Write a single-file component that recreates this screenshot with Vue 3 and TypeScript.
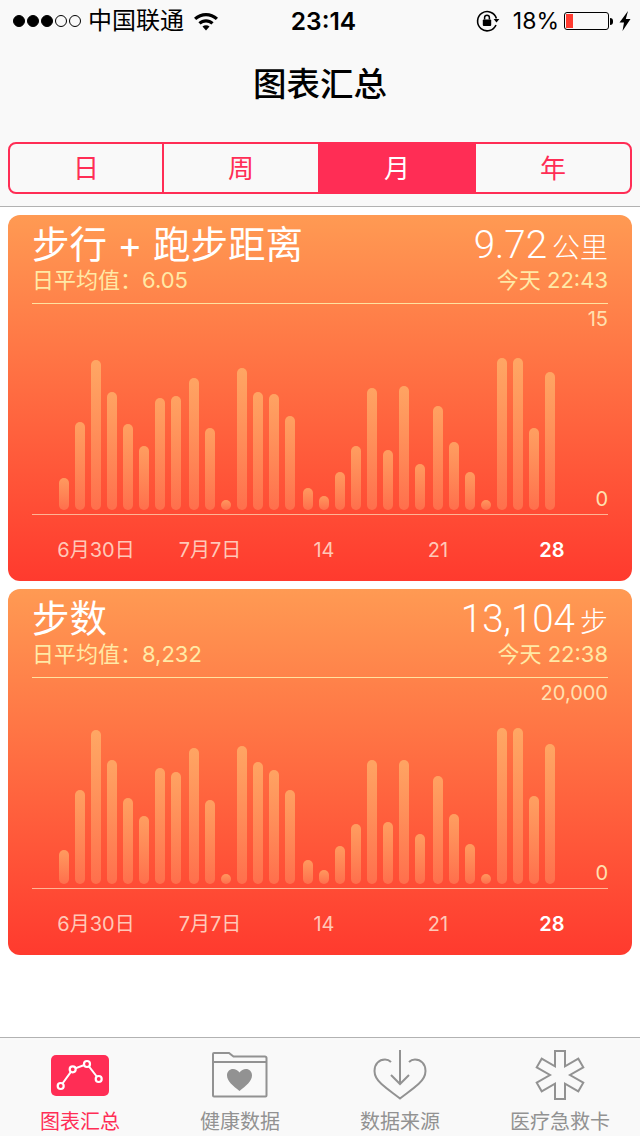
<template>
  <div class="page">
    <header class="top">
      <div class="status">
        <div class="status-left">
          <span class="signal">
            <i v-for="n in 5" :key="n" class="dot" :class="{ on: n <= 3 }"></i>
          </span>
          <span class="carrier">中国联通</span>
          <svg class="wifi" width="26" height="20" viewBox="0 0 26 20">
            <path d="M1 6.800C7.500 .4 18.500 .4 25 6.800l-2.200 2.300C17.200 4 8.800 4 3.200 9.100z" />
            <path d="M5.400 11.300c4.300-4 10.900-4 15.200 0l-2.200 2.300c-3.100-2.800-7.700-2.800-10.800 0z" />
            <path d="M9.500 15.600c2-1.700 5-1.700 7 0L13 19.500z" />
          </svg>
        </div>
        <div class="clock">23:14</div>
        <div class="status-right">
          <svg class="lock" width="24" height="24" viewBox="0 0 24 24">
            <path d="M20.400 9.500A9.600 9.600 0 1 0 20 16" fill="none" stroke="#000" stroke-width="1.600" />
            <path d="M17.600 10h5.800l-2.900 3.400z" fill="#000" />
            <rect x="6.800" y="10.400" width="8.400" height="6.600" rx="1" fill="#000" />
            <path d="M8.600 10.600V8.600a2.400 2.400 0 0 1 4.800 0v2" fill="none" stroke="#000" stroke-width="1.500" />
          </svg>
          <span class="percent">18%</span>
          <span class="battery"><i class="level"></i></span>
          <span class="nub"></span>
          <svg class="bolt" width="12" height="20" viewBox="0 0 12 20">
            <path d="M9 0 .5 11.500H5L3.500 20l8-12H6.800z" fill="#000" />
          </svg>
        </div>
      </div>
      <h1 class="title">图表汇总</h1>
      <div class="segments">
        <div
          v-for="(s, i) in segments"
          :key="s"
          class="segment"
          :class="{ active: i === 2 }"
        >{{ s }}</div>
      </div>
    </header>

    <main class="cards">
      <section v-for="card in cards" :key="card.name" class="card">
        <div class="card-head">
          <div class="head-row">
            <span class="name">{{ card.name }}</span>
            <span class="value">{{ card.value }}<small>{{ card.unit }}</small></span>
          </div>
          <div class="sub-row">
            <span>日平均值：{{ card.avg }}</span>
            <span>今天 {{ card.time }}</span>
          </div>
        </div>
        <div class="chart">
          <span class="y-label y-max">{{ card.max }}</span>
          <span class="y-label y-min">0</span>
          <div class="bars">
            <div v-for="(week, w) in groups(card.bars)" :key="w" class="week">
              <i
                v-for="(h, b) in week"
                :key="b"
                class="bar"
                :style="{ height: h + 'px' }"
              ></i>
            </div>
          </div>
        </div>
        <div class="x-axis">
          <span v-for="(d, i) in days" :key="d" :class="{ today: i === 4 }">{{ d }}</span>
        </div>
      </section>
    </main>

    <nav class="tabs">
      <div class="tab active">
        <div class="tab-icon">
          <svg width="58" height="41" viewBox="0 0 58 41">
            <rect width="58" height="41" rx="5" fill="#ff2d55" />
            <path d="M9.700 31 21.700 14.300 36 9l11.700 15" fill="none" stroke="#fff" stroke-width="2" />
            <g fill="#ff2d55" stroke="#fff" stroke-width="2.200">
              <circle cx="9.700" cy="31" r="3" />
              <circle cx="21.700" cy="14.300" r="3" />
              <circle cx="36" cy="9" r="3" />
              <circle cx="47.700" cy="24" r="3" />
            </g>
          </svg>
        </div>
        <span>图表汇总</span>
      </div>
      <div class="tab">
        <div class="tab-icon">
          <svg width="56" height="46" viewBox="0 0 56 46">
            <path d="M1 43.500V2a1 1 0 0 1 1-1h15l4.500 3.500H53a1.500 1.500 0 0 1 1.500 1.500v37.500a1 1 0 0 1-1 1H2a1 1 0 0 1-1-1zM1 10h53.500" fill="none" stroke="#929292" stroke-width="2" />
            <path d="M27.500 39C21 34 15 29 15 23.500c0-4 2.800-6.500 6-6.500 2.600 0 4.800 1.400 6.500 3.500 1.700-2.100 3.900-3.500 6.500-3.500 3.200 0 6 2.500 6 6.500 0 5.500-6 10.500-12.500 15.500z" fill="#929292" />
          </svg>
        </div>
        <span>健康数据</span>
      </div>
      <div class="tab">
        <div class="tab-icon">
          <svg width="54" height="50" viewBox="0 0 54 50">
            <path d="M18 12C16 10 14 9.500 12 9.500 6 9.500 1.500 14 1.500 21c0 5 3 9.500 7 13 6 5.500 13 10 18.500 14.500 5.500-4.500 12.500-9 18.500-14.500 4-3.500 7-8 7-13 0-7-4.500-11.500-10.500-11.500-2 0-4 .5-6 2.500" fill="none" stroke="#929292" stroke-width="2" />
            <path d="M27 0v34M18 25l9 9 9-9" fill="none" stroke="#929292" stroke-width="2" />
          </svg>
        </div>
        <span>数据来源</span>
      </div>
      <div class="tab">
        <div class="tab-icon">
          <svg width="50" height="50" viewBox="0 0 50 50">
            <path d="M20 1h10v15.340L43.300 8.670l5 8.660L35 25l13.300 7.670-5 8.660L30 33.660V49H20V33.660L6.700 41.330l-5-8.660L15 25 1.700 17.330l5-8.660L20 16.340z" fill="none" stroke="#929292" stroke-width="2" />
          </svg>
        </div>
        <span>医疗急救卡</span>
      </div>
    </nav>
  </div>
</template>

<script setup lang="ts">
const segments = ["日", "周", "月", "年"];
const days = ["6月30日", "7月7日", "14", "21", "28"];

// 柱子的高度（像素），每月 31 根
const cards = [
  {
    name: "步行 + 跑步距离",
    value: "9.72",
    unit: "公里",
    avg: "6.05",
    time: "22:43",
    max: "15",
    bars: [32, 88, 150, 118, 86, 64, 112, 114, 132, 82, 10, 142, 118, 116, 94, 22, 14, 38, 64, 122, 60, 124, 46, 104, 68, 38, 10, 152, 152, 82, 138],
  },
  {
    name: "步数",
    value: "13,104",
    unit: "步",
    avg: "8,232",
    time: "22:38",
    max: "20,000",
    bars: [34, 94, 154, 124, 86, 68, 116, 112, 136, 84, 10, 138, 122, 114, 94, 24, 14, 38, 60, 124, 62, 124, 50, 108, 70, 40, 10, 156, 156, 88, 140],
  },
];

function groups(bars: number[]) {
  return [bars.slice(0, 8), bars.slice(8, 15), bars.slice(15, 23), bars.slice(23)];
}
</script>

<style>
html, body {
  margin: 0;
  background: #fff;
}
</style>

<style scoped>
.page {
  width: 640px;
  height: 1136px;
  display: flex;
  flex-direction: column;
  font-family: Inter, "Noto Sans CJK SC", sans-serif;
  overflow: hidden;
}

.top {
  background: #f9f9f9;
  border-bottom: 1px solid #b2b2b2;
  height: 206px;
  box-sizing: content-box;
}

.status {
  height: 40px;
  display: grid;
  grid-template-columns: 1fr auto 1fr;
  align-items: center;
  color: #000;
  font-size: 24px;
}
.status-left {
  display: flex;
  align-items: center;
  padding-left: 13px;
}
.signal {
  display: flex;
  gap: 2px;
}
.dot {
  width: 12px;
  height: 12px;
  box-sizing: border-box;
  border: 1px solid #000;
  border-radius: 50%;
}
.dot.on {
  background: #000;
}
.carrier {
  margin-left: 7px;
  line-height: 42px;
}
.wifi {
  margin-left: 9px;
}
.clock {
  font-weight: 600;
  font-size: 24.500px;
  margin-left: 7px;
}
.status-right {
  display: flex;
  align-items: center;
  justify-content: flex-end;
  padding-right: 9px;
}
.percent {
  margin-left: 13px;
  font-size: 23px;
}
.battery {
  margin-left: 5px;
  width: 45px;
  height: 18px;
  box-sizing: border-box;
  border: 1px solid #000;
  border-radius: 3px;
  padding: 1px;
  display: flex;
}
.level {
  width: 7px;
  background: #ff3b30;
}
.nub {
  width: 3px;
  height: 7px;
  margin-left: 1px;
  background: #000;
  border-radius: 0 3px 3px 0;
}
.bolt {
  margin-left: 6px;
}

.title {
  margin: 0;
  height: 88px;
  line-height: 88px;
  text-align: center;
  font-size: 33.500px;
  font-weight: 500;
  color: #000;
}

.segments {
  margin: 14px 8px 0;
  height: 52px;
  box-sizing: border-box;
  display: grid;
  grid-template-columns: 154px 156px 156px 1fr;
  border: 2px solid #ff2d55;
  border-radius: 8px;
  overflow: hidden;
}
.segment {
  display: flex;
  align-items: center;
  justify-content: center;
  padding-bottom: 4px;
  color: #ff2d55;
  font-size: 26px;
  border-right: 2px solid #ff2d55;
}
.segment:last-child {
  border-right: 0;
}
.segment.active {
  background: #ff2d55;
  color: #fff;
}

.cards {
  flex: 1;
  padding: 8px 8px 0;
  display: flex;
  flex-direction: column;
  gap: 8px;
  background: #fff;
}
.card {
  height: 366px;
  box-sizing: border-box;
  border-radius: 12px;
  padding: 0 24px;
  background: linear-gradient(#ff9a53, #ff3a2e);
  color: #fff;
}

.card-head {
  height: 88px;
  border-bottom: 1px solid rgba(255, 236, 170, 0.9);
}
.head-row {
  display: flex;
  justify-content: space-between;
  align-items: baseline;
  height: 50px;
  line-height: 60px;
}
.name {
  font-size: 37.500px;
  font-weight: 400;
}
.value {
  font-family: Roboto, "Noto Sans CJK SC", sans-serif;
  font-size: 38.500px;
  font-weight: 300;
}
.value small {
  font-size: 28px;
  margin-left: 5px;
}
.sub-row {
  display: flex;
  justify-content: space-between;
  font-size: 22px;
  line-height: 30px;
  color: #ffe9a6;
}

.chart {
  position: relative;
  height: 211px;
  box-sizing: border-box;
  border-bottom: 1px solid rgba(255, 225, 190, 0.7);
  padding: 0 0 4px 27px;
  display: flex;
  align-items: flex-end;
}
.y-label {
  position: absolute;
  right: 0;
  font-size: 20px;
  color: #ffe0b0;
}
.y-max {
  top: 3px;
}
.y-min {
  bottom: 3px;
}
.bars {
  display: flex;
  gap: 8px;
  align-items: flex-end;
}
.week {
  display: flex;
  gap: 6px;
  align-items: flex-end;
}
.bar {
  width: 10px;
  border-radius: 5px;
  background: linear-gradient(rgba(255, 200, 120, 0.6), rgba(255, 190, 130, 0.3));
}

.x-axis {
  display: grid;
  grid-template-columns: repeat(5, 114px);
  margin-left: 7px;
  padding-top: 22px;
  text-align: center;
  font-size: 20px;
  line-height: 26px;
  color: rgba(255, 225, 210, 0.85);
}
.x-axis .today {
  color: #fff;
  font-weight: 600;
}

.tabs {
  height: 98px;
  background: #f9f9f9;
  border-top: 1px solid #b2b2b2;
  display: grid;
  grid-template-columns: repeat(4, 1fr);
}
.tab {
  display: flex;
  flex-direction: column;
  align-items: center;
  color: #929292;
  font-size: 20px;
  line-height: 20px;
}
.tab-icon {
  height: 74px;
  display: flex;
  align-items: center;
}
.tab.active {
  color: #ff2d55;
}
</style>
